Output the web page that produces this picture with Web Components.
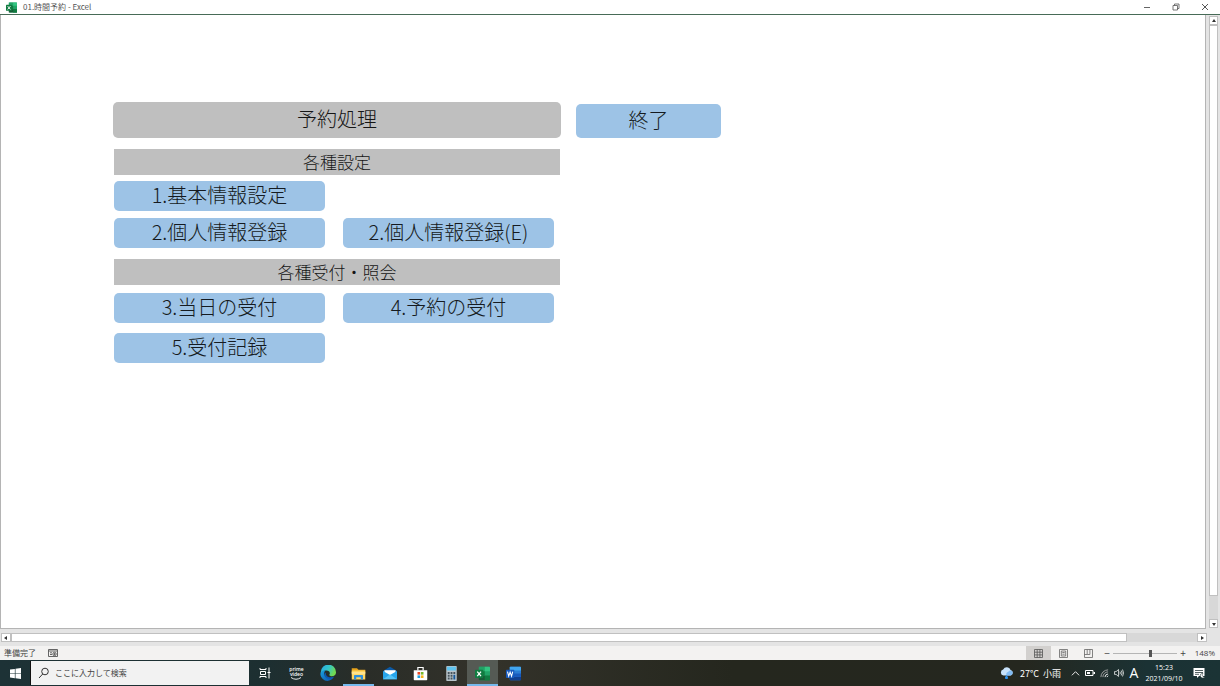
<!DOCTYPE html>
<html lang="ja">
<head>
<meta charset="utf-8">
<title>01.時間予約 - Excel</title>
<style>
  html, body { margin: 0; height: 100%; }
  body { font-family: "Noto Sans CJK JP", "Liberation Sans", sans-serif; background: #fff; overflow: hidden; }
</style>
</head>
<body>
<excel-app></excel-app>
<script>
const define = (name, html, setup) => {
  const t = document.createElement('template');
  t.innerHTML = `<style>*{box-sizing:border-box}button{font:inherit;color:inherit;border:0;padding:0;margin:0;background:none}svg{display:block}</style>` + html;
  customElements.define(name, class extends HTMLElement {
    constructor() {
      super();
      this.attachShadow({ mode: 'open' }).append(t.content.cloneNode(true));
    }
    connectedCallback() { if (setup) setup(this, this.shadowRoot); }
  });
};

const ICONS = {
  excel: `<svg viewBox="0 0 20 20"><path d="M6 1h13a1 1 0 0 1 1 1v16a1 1 0 0 1-1 1H6z" fill="#21a366"/><path d="M5 1h8v6H5z" fill="#21a366"/><path d="M13 1h6a1 1 0 0 1 1 1v5h-7z" fill="#33c481"/><path d="M5 7h8v6H5z" fill="#107c41"/><path d="M5 13h15v5a1 1 0 0 1-1 1H6a1 1 0 0 1-1-1z" fill="#185c37"/><path d="M13 13h7v5a1 1 0 0 1-1 1h-6z" fill="#107c41"/><rect y="5" width="11" height="11" rx="1" fill="#107c41"/><path d="M3 7.500l5 6M8 7.500l-5 6" stroke="#fff" stroke-width="1.700"/></svg>`,
  word: `<svg viewBox="0 0 20 20"><rect x="5" y="1" width="15" height="18" rx="1" fill="#2b7cd3"/><path d="M6 1h13a1 1 0 0 1 1 1v4H5V2a1 1 0 0 1 1-1z" fill="#41a5ee"/><path d="M5 10h15v4.500H5z" fill="#185abd"/><path d="M5 14.500h15V18a1 1 0 0 1-1 1H6a1 1 0 0 1-1-1z" fill="#103f91"/><rect y="5" width="11" height="11" rx="1" fill="#185abd"/><path d="M2 7.500l1.600 6 1.900-5.500 1.900 5.500 1.600-6" fill="none" stroke="#fff" stroke-width="1.400"/></svg>`,
  windows: `<svg viewBox="0 0 12 12"><path d="M0 1.700L5.300 1v4.700H0zM6 .9L12 0v5.700H6zM0 6.400h5.300v4.700L0 10.400zM6 6.400h6V12l-6-.9z" fill="#fff"/></svg>`,
  search: `<svg viewBox="0 0 12 12" fill="none" stroke="#333" stroke-width="1"><circle cx="7" cy="4.500" r="3.300"/><path d="M4.700 7L1 11"/></svg>`,
  taskview: `<svg viewBox="0 0 12 12" fill="none" stroke="#fff" stroke-width="1"><path d="M1 1v1.500h6V1M1 11V9.500h6V11M1.500 4.500h5v3h-5zM10 .5v11M8.500 5.500h3"/></svg>`,
  edge: `<svg viewBox="0 0 20 20"><defs><linearGradient id="a" x2="1" y2=".4"><stop stop-color="#2aa5e8"/><stop offset=".55" stop-color="#32c6c8"/><stop offset="1" stop-color="#72d950"/></linearGradient><linearGradient id="b" y2="1"><stop stop-color="#1aa3e0"/><stop offset="1" stop-color="#0c4fa8"/></linearGradient></defs><path d="M1 9A9.500 9.500 0 0 1 20 9c.2 3-2 5-5 5-2.300 0-3.800-1-3.200-2 1.700-3-1-5.500-4.300-5C3.500 7 .5 10 .6 11z" fill="url(#a)"/><path d="M.5 11C1 7.500 4 6 7 6.500 4 9 5 14 9 15.500c3 1.300 6 .5 8.500-1-3 6-10 7-14 3C1.400 15.600.4 13 .5 11z" fill="url(#b)"/><path d="M7.500 9.500c-1 4 2.500 7.500 9.800 5.200C14 19 8 18 6 14.500c-.9-2-.3-4 1.500-5z" fill="#0c58b4"/></svg>`,
  folder: `<svg viewBox="0 0 20 20"><path d="M1 3h7l2 2h9v4H1z" fill="#e8a41c"/><path d="M1 6h18v12H1z" fill="#ffd661"/><path d="M1 8h18v3H1z" fill="#ffe48f"/><path d="M4 18v-5a1 1 0 0 1 1-1h10a1 1 0 0 1 1 1v5h-3v-3H7v3z" fill="#2d8fdd"/></svg>`,
  mail: `<svg viewBox="0 0 20 20"><path d="M0 7l10-6 10 6v3H0z" fill="#0c59a4"/><path d="M2 6h16v8H2z" fill="#fff"/><path d="M0 7l10 6 10-6v12H0z" fill="#27a5ec"/><path d="M0 19l10-7 10 7z" fill="#55c4f7"/></svg>`,
  store: `<svg viewBox="0 0 20 20"><path d="M6.500 6V2h7v4" fill="none" stroke="#fff" stroke-width="1.600"/><path d="M1 5.500h18V18a1 1 0 0 1-1 1H2a1 1 0 0 1-1-1z" fill="#fff"/><path d="M6 8h3.500v3.500H6z" fill="#e84a27"/><path d="M10.500 8H14v3.500h-3.500z" fill="#78b82a"/><path d="M6 12.500h3.500V16H6z" fill="#1c9fe0"/><path d="M10.500 12.500H14V16h-3.500z" fill="#f5b31a"/></svg>`,
  calc: `<svg viewBox="0 0 20 20"><rect x="3" width="14" height="20" rx="1" fill="#b9c4ca"/><path d="M4 1h12v5H4z" fill="#60c4ef"/><g fill="#47545c"><path d="M5 8h2.500v2.500H5zM8.800 8h2.500v2.500H8.800zM12.500 8H15v2.500h-2.500zM5 11.700h2.500v2.500H5zM8.800 11.700h2.500v2.500H8.800zM5 15.400h2.500V18H5zM8.800 15.400h2.500V18H8.800z"/></g><path d="M12.500 11.700H15V18h-2.500z" fill="#17599b"/></svg>`,
  cloud: `<svg viewBox="0 0 14 12"><path d="M3.500 8.500a3 3 0 0 1-.3-5.900A4 4 0 0 1 10.600 3a2.900 2.900 0 0 1-.1 5.600z" fill="#c8e2fb"/><path d="M7 8.600a2 2 0 0 1 1-3.500c1-2 3-2 4-1.200a2.900 2.900 0 0 1-1.500 4.700z" fill="#82bbf3"/><path d="M6.500 8l1.300 2a1.500 1.500 0 1 1-2.600 0z" fill="#2c91ed"/></svg>`,
  chevron: `<svg viewBox="0 0 10 10" fill="none" stroke="#fff"><path d="M1 7l4-4 4 4"/></svg>`,
  battery: `<svg viewBox="0 0 10 10"><path d="M.5 2.500H8v5H.5z" fill="none" stroke="#fff"/><path d="M2 4h3v2H2zM8.500 4H10v2H8.500z" fill="#fff"/></svg>`,
  wifi: `<svg viewBox="0 0 10 10" fill="none" stroke="#aaa"><path d="M1 9a8 8 0 0 1 8-8M3.200 9A6 6 0 0 1 9 3.200"/><path d="M5.500 9A4 4 0 0 1 9 5.500M7.500 9L9 7.500" stroke="#fff"/></svg>`,
  sound: `<svg viewBox="0 0 11 10" fill="none" stroke="#fff" stroke-width=".8"><path d="M.5 3.500h1.800L5 1.200v7.600L2.300 6.500H.5zM6.500 3.500q1 1.500 0 3M8 2.300q1.800 2.700 0 5.400M9.400 1.200q2.200 3.800 0 7.600"/></svg>`,
  notice: `<svg viewBox="0 0 12 12"><path d="M.5 1h11v8H6L4 11V9H.500z" fill="#fff"/><path d="M2 3.500h8M2 5.500h8M2 7.300h4" stroke="#2a3b3c" stroke-width=".8"/><path d="M10 6a2.500 2.500 0 1 0 1.800 4A2.300 2.300 0 0 1 10 6z" fill="#fff" stroke="#2a3b3c" stroke-width=".6"/></svg>`,
  min: `<svg viewBox="0 0 8 8" stroke="#555" stroke-width=".9"><path d="M1 4.500h6"/></svg>`,
  restore: `<svg viewBox="0 0 8 8" fill="none" stroke="#555" stroke-width=".8"><path d="M1 2.500h4.500V7H1zM2.500 2.500V1H7v4.500H5.500"/></svg>`,
  close: `<svg viewBox="0 0 8 8" stroke="#444" stroke-width=".9"><path d="M1 1l6 6M7 1L1 7"/></svg>`,
  macro: `<svg viewBox="0 0 10 8" fill="none" stroke="#555" stroke-width=".9"><path d="M.5 7.500v-7h9v7zM.5 2h9M2 3.800h2M2 5.500h2"/><circle cx="6.500" cy="5" r="1.700"/><circle cx="6.500" cy="5" r=".5" fill="#333"/></svg>`,
  grid: `<svg viewBox="0 0 9 9" fill="none" stroke="#555" stroke-width=".8"><path d="M.5.5h8v8h-8zM.5 3.200h8M.5 5.900h8M3.200.5v8M5.900.5v8"/></svg>`,
  layout: `<svg viewBox="0 0 9 9" fill="none" stroke="#666" stroke-width=".8"><path d="M.5.5h8v8h-8zM2.300 2h4.400v5H2.300zM3.300 3.500h2.400M3.300 5.200h2.400"/></svg>`,
  breaks: `<svg viewBox="0 0 9 9" fill="none" stroke="#666" stroke-width=".8"><path d="M.5.5h8v8h-8zM3.200.5v5H.5M5.900.5v5H3.200"/></svg>`,
};

define('ui-icon', `<style>
  :host { display: block; flex: none; width: var(--w, 12px); height: var(--h, var(--w, 12px)); }
  svg { width: 100%; height: 100%; }
</style>`, (el, root) => {
  if (!root.querySelector('svg')) root.append(document.createRange().createContextualFragment(ICONS[el.getAttribute('name')]));
});

define('title-bar', `<style>
  :host { display: flex; align-items: center; height: 15px; flex: none; border-bottom: 1px solid #476b57; background: #fff; padding: 0 1px 0 6px; gap: 6px; color: #555; box-sizing: border-box; }
  h1 { flex: 1; margin: 0; font-size: 8px; line-height: 14px; font-weight: 400; }
  .controls { display: flex; --w: 8px; }
  button { width: 29px; height: 14px; display: grid; place-items: center; }
</style>
<ui-icon name="excel" style="--w:11px"></ui-icon>
<h1><slot></slot></h1>
<div class="controls">
<button aria-label="最小化"><ui-icon name="min"></ui-icon></button>
<button aria-label="元に戻す"><ui-icon name="restore"></ui-icon></button>
<button aria-label="閉じる"><ui-icon name="close"></ui-icon></button>
</div>`);

define('menu-button', `<style>
  :host { display: block; }
  button { width: 100%; height: var(--row, 30px); border-radius: 5px; background: #9dc3e6; color: #151a20; font-size: 20px; line-height: 28px; font-weight: 300; padding-bottom: 2px; white-space: nowrap; display: block; }
</style><button><slot></slot></button>`);

define('menu-heading', `<style>
  :host { display: block; }
  h2 { margin: 0; height: 26px; line-height: 26px; font-size: 17px; font-weight: 300; text-align: center; background: #bfbfbf; color: #151515; }
  :host([main]) h2 { height: 36px; line-height: 34px; font-size: 20px; border-radius: 5px; }
</style><h2><slot></slot></h2>`);

define('menu-group', `<style>
  :host { display: block; padding: 0 1px; }
  .items { display: grid; grid-template-columns: 211px 211px; column-gap: 18px; row-gap: var(--gap, 7px); padding-top: var(--top, 6px); }
</style><menu-heading><slot name="heading"></slot></menu-heading><div class="items"><slot></slot></div>`);

define('work-sheet', `<style>
  :host { display: block; flex: 1; min-width: 0; background: #fff; border: solid #b4b4b4; border-width: 0 1px 1px; overflow: hidden; }
  .board { display: flex; align-items: flex-start; gap: 15px; padding: 87px 0 0 112px; }
  .panel { display: flex; flex-direction: column; gap: 11px; width: 448px; flex: none; }
  .exit { width: 145px; padding-top: 2px; --row: 34px; }
  .wide { --gap: 10px; --top: 8px; }
  .first { grid-column: 1; }
</style>
<main class="board">
  <div class="panel">
    <menu-heading main>予約処理</menu-heading>
    <menu-group><span slot="heading">各種設定</span>
      <menu-button>1.基本情報設定</menu-button>
      <menu-button class="first">2.個人情報登録</menu-button>
      <menu-button>2.個人情報登録(E)</menu-button>
    </menu-group>
    <menu-group class="wide"><span slot="heading">各種受付・照会</span>
      <menu-button>3.当日の受付</menu-button>
      <menu-button>4.予約の受付</menu-button>
      <menu-button>5.受付記録</menu-button>
    </menu-group>
  </div>
  <menu-button class="exit">終了</menu-button>
</main>`);

define('scroll-bar', `<style>
  :host { display: flex; flex: none; background: #e4e4e4; box-sizing: border-box; }
  :host([vertical]) { flex-direction: column; width: 14px; padding: 1px 2px 1px 3px; }
  :host(:not([vertical])) { height: 17px; padding: 4px 13px 4px 1px; }
  button { flex: none; width: 10px; height: 9px; background: #fff; border: 1px solid #c0c0c0; display: grid; place-items: center; }
  svg { width: 4px; height: 4px; }
  .track { flex: 1; display: flex; flex-direction: inherit; background: #d8d8d8; }
  .thumb { background: #fff; border: 1px solid #c0c0c0; flex: 1116; }
  .rest { flex: 70; }
  :host([vertical]) .thumb { flex: 570; }
  :host([vertical]) .rest { flex: 23; }
  :host([vertical]) button { width: 9px; }
  :host([vertical]) svg { rotate: 90deg; }
</style>
<button aria-label="前へ"><svg viewBox="0 0 4 4"><path d="M3 0v4L0 2z" fill="#333"/></svg></button>
<div class="track"><div class="thumb"></div><div class="rest"></div></div>
<button aria-label="次へ"><svg viewBox="0 0 4 4"><path d="M1 0v4l3-2z" fill="#333"/></svg></button>`);

define('status-bar', `<style>
  :host { display: flex; align-items: center; flex: none; height: 14px; background: #f3f2f1; padding: 0 5px 0 4px; font-size: 8px; line-height: 14px; color: #444; box-sizing: border-box; }
  .ready { display: flex; align-items: center; gap: 12px; flex: 1; }
  .views { display: flex; --w: 9px; }
  .views button { width: 25px; height: 14px; display: grid; place-items: center; }
  .views .on { background: #d2d0ce; }
  .zoom { display: flex; align-items: center; }
  .zoom button { width: 12px; height: 14px; line-height: 14px; font-size: 10px; }
  input { appearance: none; width: 64px; height: 14px; margin: 0; background: linear-gradient(#b5b5b5, #b5b5b5) center / 100% 1px no-repeat; }
  input::-webkit-slider-thumb { appearance: none; width: 3px; height: 7px; background: #555; }
  output { width: 26px; text-align: right; font: 8px/14px "Open Sans", sans-serif; }
</style>
<div class="ready"><span>準備完了</span><ui-icon name="macro" style="--w:10px;--h:8px"></ui-icon></div>
<div class="views"><button class="on" aria-label="標準"><ui-icon name="grid"></ui-icon></button><button aria-label="ページ レイアウト"><ui-icon name="layout"></ui-icon></button><button aria-label="改ページ プレビュー"><ui-icon name="breaks"></ui-icon></button></div>
<div class="zoom"><button aria-label="縮小">−</button><input type="range" min="0" max="100" value="59" aria-label="ズーム"><button aria-label="拡大">+</button><output>148%</output></div>`);

define('task-button', `<style>
  :host { display: block; width: 31px; height: 26px; }
  button { width: 100%; height: 100%; display: grid; place-items: center; color: #fff; border-bottom: 2px solid transparent; border-top: 2px solid transparent; --w: 15px; }
  :host([open]) button { border-bottom-color: #76b9ed; }
  :host([current]) button { background: #555a54; border-top-color: #555a54; }
</style><button><slot></slot></button>`);

define('task-bar', `<style>
  :host { display: flex; flex: none; height: 26px; background: linear-gradient(90deg, #1d3236 0, #1d2f31 22%, #2a2d28 30%, #33322a 40%, #25271e 60%, #25271f 84%, #1b3234 94%, #1b3335); color: #fff; }
  .start { width: 30px; display: grid; place-items: center; }
  .search { display: flex; align-items: center; width: 219px; margin: 1px 0; border-left: 1px solid #111; background: #f2f2f2; padding-left: 7px; gap: 5px; }
  input { flex: 1; min-width: 0; border: 0; padding: 0; background: none; font: 8px/16px "Noto Sans CJK JP", sans-serif; outline: 0; }
  input::placeholder { color: #444; opacity: 1; }
  .apps { display: flex; flex: 1; }
  .first { width: 32px; }
  .prime { display: block; font: 600 5px/5px "Open Sans", sans-serif; text-align: center; }
  .prime svg { width: 12px; height: 3px; margin: 0 auto; }
  .tray { display: flex; align-items: center; padding-right: 15px; font-size: 9px; }
  .weather { display: flex; align-items: center; gap: 6px; margin-right: 10px; white-space: nowrap; }
  .icons { display: flex; align-items: center; gap: 5px; --w: 9px; }
  .ime { font: 14px/20px "Open Sans", sans-serif; width: 10px; text-align: center; }
  .clock { font: 7px/11px "Open Sans", sans-serif; text-align: center; margin: 0 10px 0 6px; width: 38px; white-space: nowrap; }
  .clock span { display: block; }
</style>
<button class="start" aria-label="スタート"><ui-icon name="windows" style="--w:11px"></ui-icon></button>
<label class="search"><ui-icon name="search" style="--w:12px"></ui-icon><input type="text" placeholder="ここに入力して検索" aria-label="検索"></label>
<nav class="apps">
  <task-button class="first"><ui-icon name="taskview" style="--w:12px"></ui-icon></task-button>
  <task-button><span class="prime">prime<br>video<svg viewBox="0 0 12 3" fill="none" stroke="#fff" stroke-width=".9"><path d="M1 .5q5 3.500 10 0"/></svg></span></task-button>
  <task-button><ui-icon name="edge" style="--w:16px"></ui-icon></task-button>
  <task-button open><ui-icon name="folder"></ui-icon></task-button>
  <task-button><ui-icon name="mail" style="--w:16px;--h:14px"></ui-icon></task-button>
  <task-button><ui-icon name="store"></ui-icon></task-button>
  <task-button><ui-icon name="calc"></ui-icon></task-button>
  <task-button open current><ui-icon name="excel"></ui-icon></task-button>
  <task-button><ui-icon name="word"></ui-icon></task-button>
</nav>
<div class="tray">
  <div class="weather"><ui-icon name="cloud" style="--w:14px;--h:12px"></ui-icon><span>27°C&nbsp; 小雨</span></div>
  <div class="icons"><ui-icon name="chevron"></ui-icon><ui-icon name="battery" style="--w:10px"></ui-icon><ui-icon name="wifi"></ui-icon><ui-icon name="sound" style="--w:10px"></ui-icon><span class="ime">A</span></div>
  <time class="clock" datetime="2021-09-10T15:23"><span>15:23</span><span>2021/09/10</span></time>
  <ui-icon name="notice" style="--w:12px"></ui-icon>
</div>`);

define('excel-app', `<style>
  :host { display: flex; flex-direction: column; height: 100vh; }
  .view { display: flex; flex: 1; min-height: 0; }
</style>
<title-bar>01.時間予約 - Excel</title-bar>
<div class="view"><work-sheet></work-sheet><scroll-bar vertical></scroll-bar></div>
<scroll-bar></scroll-bar>
<status-bar></status-bar>
<task-bar></task-bar>`);
</script>
</body>
</html>
